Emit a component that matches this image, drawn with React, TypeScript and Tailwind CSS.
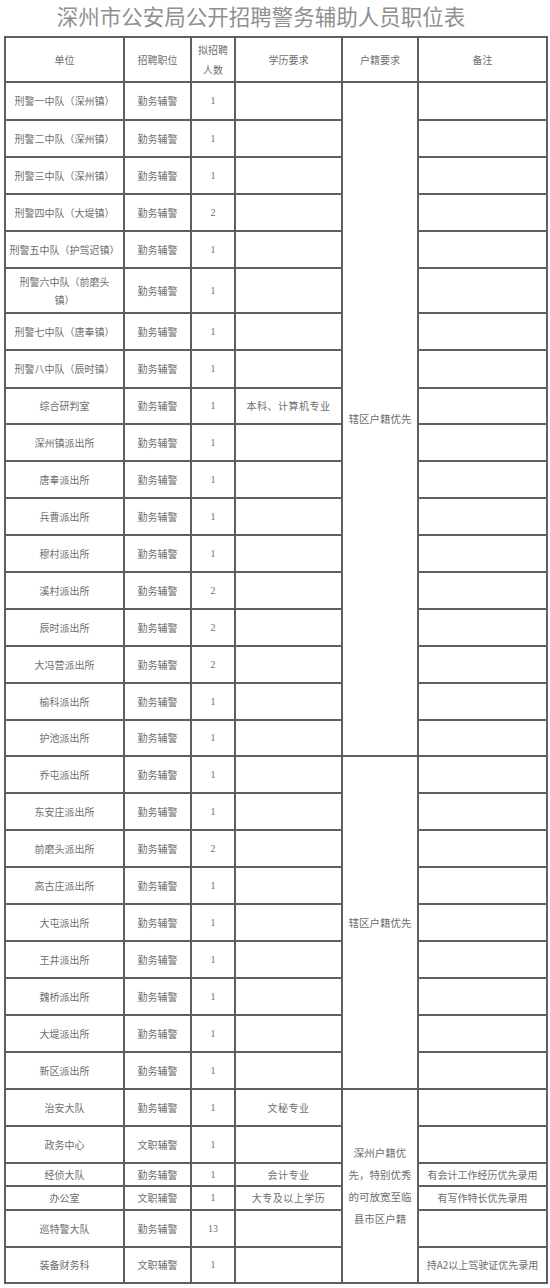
import React from "react";

type Row = {
  unit: React.ReactNode;
  pos: string;
  n: string;
  edu?: string;
  note?: string;
  h: string;
  hukou?: { text: React.ReactNode; span: number };
};

const HUKOU1 = "辖区户籍优先";

const rows: Row[] = [
  { unit: "刑警一中队（深州镇）", pos: "勤务辅警", n: "1", h: "h-[38px]", hukou: { text: HUKOU1, span: 18 } },
  { unit: "刑警二中队（深州镇）", pos: "勤务辅警", n: "1", h: "h-[37px]" },
  { unit: "刑警三中队（深州镇）", pos: "勤务辅警", n: "1", h: "h-[37px]" },
  { unit: "刑警四中队（大堤镇）", pos: "勤务辅警", n: "2", h: "h-[37px]" },
  { unit: "刑警五中队（护驾迟镇）", pos: "勤务辅警", n: "1", h: "h-[37px]" },
  {
    unit: (
      <>
        刑警六中队（前磨头
        <br />
        镇）
      </>
    ),
    pos: "勤务辅警",
    n: "1",
    h: "h-[45px]",
  },
  { unit: "刑警七中队（唐奉镇）", pos: "勤务辅警", n: "1", h: "h-[37px]" },
  { unit: "刑警八中队（辰时镇）", pos: "勤务辅警", n: "1", h: "h-[38px]" },
  { unit: "综合研判室", pos: "勤务辅警", n: "1", edu: "本科、计算机专业", h: "h-[36px]" },
  { unit: "深州镇派出所", pos: "勤务辅警", n: "1", h: "h-[37px]" },
  { unit: "唐奉派出所", pos: "勤务辅警", n: "1", h: "h-[37px]" },
  { unit: "兵曹派出所", pos: "勤务辅警", n: "1", h: "h-[37px]" },
  { unit: "穆村派出所", pos: "勤务辅警", n: "1", h: "h-[37px]" },
  { unit: "溪村派出所", pos: "勤务辅警", n: "2", h: "h-[37px]" },
  { unit: "辰时派出所", pos: "勤务辅警", n: "2", h: "h-[37px]" },
  { unit: "大冯营派出所", pos: "勤务辅警", n: "2", h: "h-[37px]" },
  { unit: "榆科派出所", pos: "勤务辅警", n: "1", h: "h-[37px]" },
  { unit: "护池派出所", pos: "勤务辅警", n: "1", h: "h-[36px]" },
  { unit: "乔屯派出所", pos: "勤务辅警", n: "1", h: "h-[37px]", hukou: { text: HUKOU1, span: 9 } },
  { unit: "东安庄派出所", pos: "勤务辅警", n: "1", h: "h-[37px]" },
  { unit: "前磨头派出所", pos: "勤务辅警", n: "2", h: "h-[37px]" },
  { unit: "高古庄派出所", pos: "勤务辅警", n: "1", h: "h-[37px]" },
  { unit: "大屯派出所", pos: "勤务辅警", n: "1", h: "h-[37px]" },
  { unit: "王井派出所", pos: "勤务辅警", n: "1", h: "h-[37px]" },
  { unit: "魏桥派出所", pos: "勤务辅警", n: "1", h: "h-[37px]" },
  { unit: "大堤派出所", pos: "勤务辅警", n: "1", h: "h-[37px]" },
  { unit: "新区派出所", pos: "勤务辅警", n: "1", h: "h-[37px]" },
  {
    unit: "治安大队",
    pos: "勤务辅警",
    n: "1",
    edu: "文秘专业",
    h: "h-[37px]",
    hukou: {
      text: (
        <>
          深州户籍优
          <br />
          先，特别优秀
          <br />
          的可放宽至临
          <br />
          县市区户籍
        </>
      ),
      span: 6,
    },
  },
  { unit: "政务中心", pos: "文职辅警", n: "1", h: "h-[37px]" },
  { unit: "经侦大队", pos: "勤务辅警", n: "1", edu: "会计专业", note: "有会计工作经历优先录用", h: "h-[23px]" },
  { unit: "办公室", pos: "文职辅警", n: "1", edu: "大专及以上学历", note: "有写作特长优先录用", h: "h-[24px]" },
  { unit: "巡特警大队", pos: "勤务辅警", n: "13", h: "h-[37px]" },
  { unit: "装备财务科", pos: "文职辅警", n: "1", note: "持A2以上驾驶证优先录用", h: "h-[36px]" },
];

const cell = "border-2 border-[#5f5f5f] text-center align-middle p-0";

export default function App() {
  return (
    <div
      className="w-[550px] h-[1288px] bg-white text-[#6e6e6e] overflow-hidden"
      style={{ fontFamily: '"Noto Sans CJK SC", "Noto Sans", sans-serif' }}
    >
      <div className="h-[36px] flex items-start justify-center pr-[28px]">
        <h1 className="text-[21.5px] leading-[32px] text-[#909090] font-normal">
          深州市公安局公开招聘警务辅助人员职位表
        </h1>
      </div>
      <table className="ml-[4px] w-[542px] table-fixed border-collapse text-[10px] leading-[18px]">
        <colgroup>
          <col className="w-[119px]" />
          <col className="w-[67px]" />
          <col className="w-[44px]" />
          <col className="w-[107px]" />
          <col className="w-[76px]" />
          <col className="w-[129px]" />
        </colgroup>
        <tbody>
          <tr className="h-[45px]">
            <td className={cell}>单位</td>
            <td className={cell}>招聘职位</td>
            <td className={`${cell} leading-[20px]`}>
              拟招聘
              <br />
              人数
            </td>
            <td className={cell}>学历要求</td>
            <td className={cell}>户籍要求</td>
            <td className={cell}>备注</td>
          </tr>
          {rows.map((r, i) => (
            <tr key={i} className={r.h}>
              <td className={cell}>{r.unit}</td>
              <td className={cell}>{r.pos}</td>
              <td className={cell} style={{ fontFamily: '"Liberation Serif", serif' }}>
                {r.n}
              </td>
              <td className={`${cell} tracking-[0.5px]`}>{r.edu ?? ""}</td>
              {r.hukou && (
                <td className={`${cell} leading-[22px] text-[10.5px]`} rowSpan={r.hukou.span}>
                  {r.hukou.text}
                </td>
              )}
              <td className={`${cell} whitespace-nowrap`}>{r.note ?? ""}</td>
            </tr>
          ))}
        </tbody>
      </table>
    </div>
  );
}
